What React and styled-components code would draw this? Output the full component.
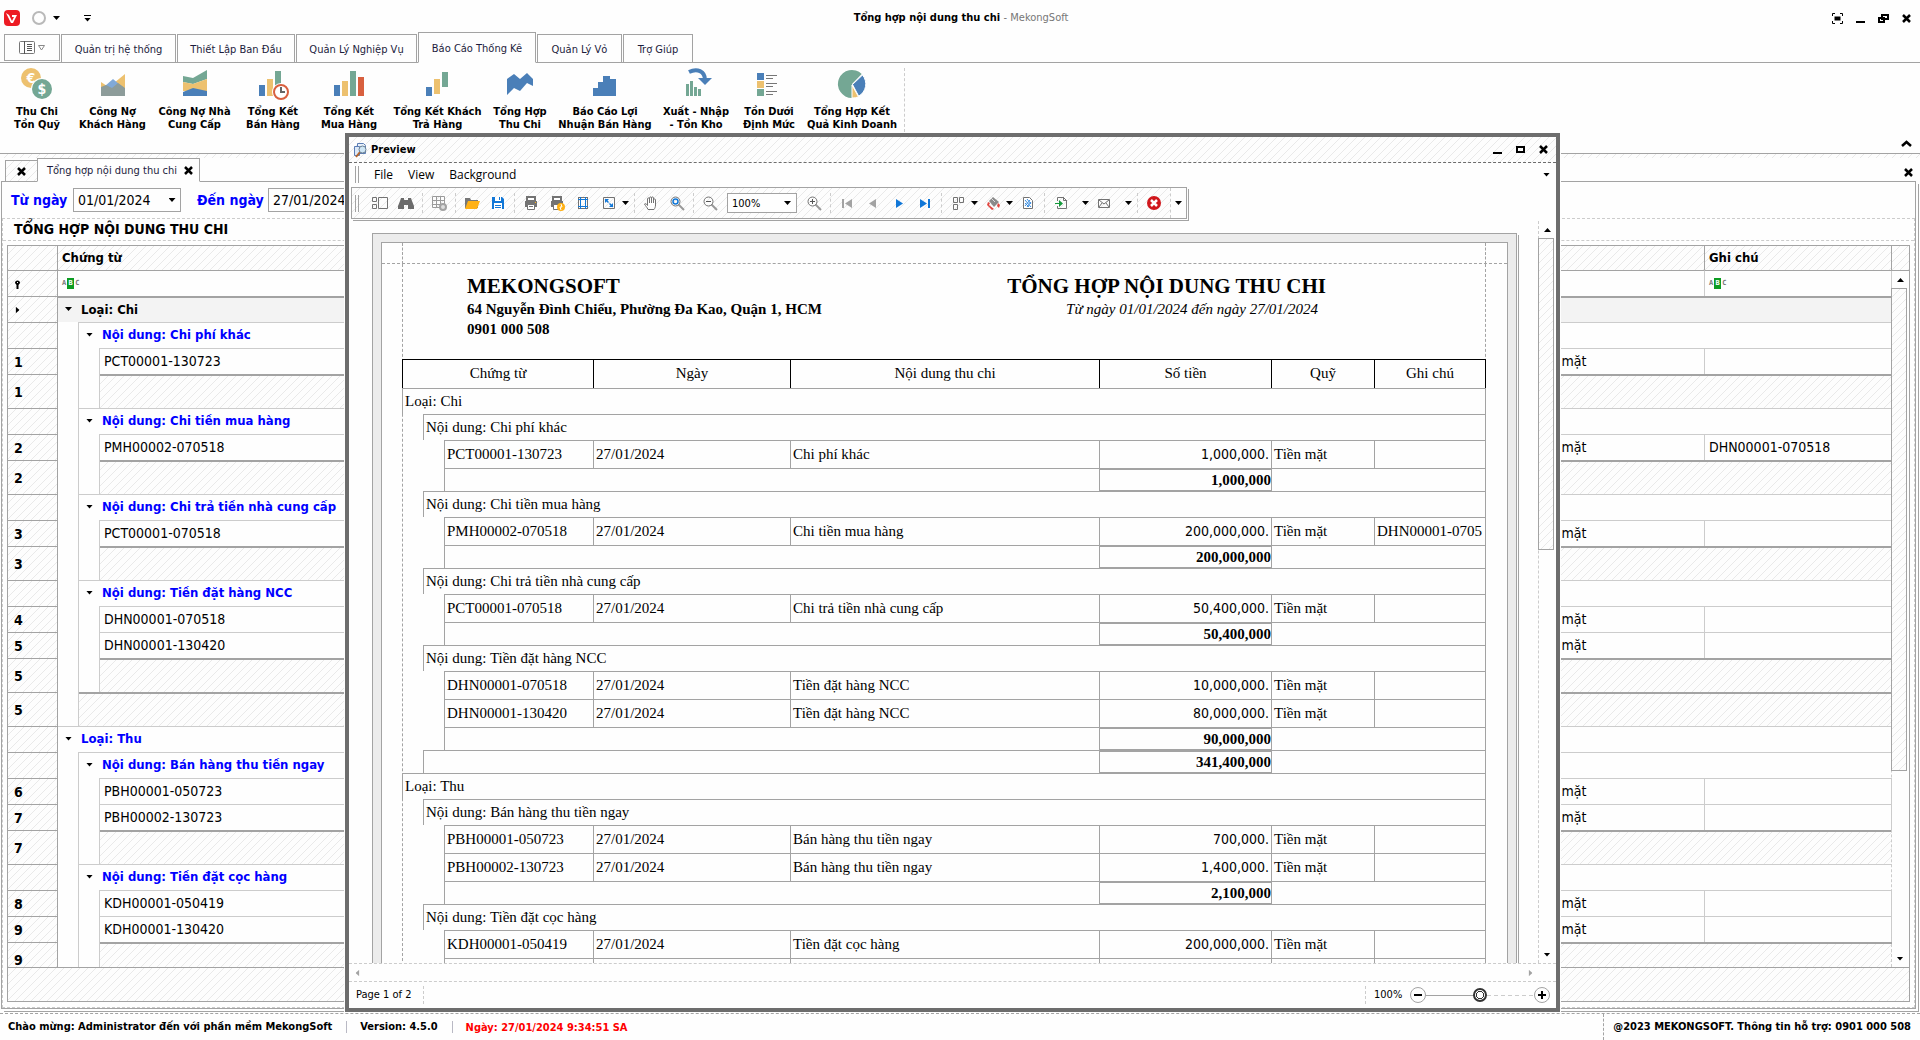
import React, { useState } from 'react';
import styled, { createGlobalStyle, css } from 'styled-components';

const line = '#a3a3a3';
const soft = '#cccccc';
const hatch = css`
	background-color: #fdfdfd;
	background-image: linear-gradient(
		135deg,
		transparent 46%,
		#e9e9e9 46%,
		#e9e9e9 54%,
		transparent 54%
	);
	background-size: 8px 8px;
`;

const GlobalStyle = createGlobalStyle`
	* {
		box-sizing: border-box;
	}
	body {
		margin: 0;
		background: #fefefe;
		color: #000;
		font-family: 'DejaVu Sans Condensed', 'DejaVu Sans', sans-serif;
		font-size: 11px;
	}
	button, input, select {
		font: inherit;
		color: inherit;
		margin: 0;
		padding: 0;
		border: 0;
		border-radius: 0;
		background: none;
	}
	svg {
		display: block;
		flex: none;
	}
`;

/* ---------- data ---------- */

const tabs = [
	{ name: 'Quản trị hệ thống', width: 116 },
	{ name: 'Thiết Lập Ban Đầu', width: 119 },
	{ name: 'Quản Lý Nghiệp Vụ', width: 122 },
	{ name: 'Báo Cáo Thống Kê', width: 119 },
	{ name: 'Quản Lý Vỏ', width: 86 },
	{ name: 'Trợ Giúp', width: 71 },
];

const ribbon = [
	{ icon: 'coins', lines: ['Thu Chi', 'Tồn Quỹ'], width: 66 },
	{ icon: 'area', lines: ['Công Nợ', 'Khách Hàng'], width: 85 },
	{ icon: 'stacked', lines: ['Công Nợ Nhà', 'Cung Cấp'], width: 79 },
	{ icon: 'clock', lines: ['Tổng Kết', 'Bán Hàng'], width: 78 },
	{ icon: 'bars', lines: ['Tổng Kết', 'Mua Hàng'], width: 74 },
	{ icon: 'waterfall', lines: ['Tổng Kết Khách', 'Trả Hàng'], width: 103 },
	{ icon: 'range', lines: ['Tổng Hợp', 'Thu Chi'], width: 62 },
	{ icon: 'steps', lines: ['Báo Cáo Lợi', 'Nhuận Bán Hàng'], width: 108 },
	{ icon: 'turn', lines: ['Xuất - Nhập', '- Tồn Kho'], width: 74 },
	{ icon: 'list', lines: ['Tồn Dưới', 'Định Mức'], width: 72 },
	{ icon: 'pie', lines: ['Tổng Hợp Kết', 'Quả Kinh Doanh'], width: 94 },
];

const report = [
	{
		name: 'Loại: Chi',
		total: '341,400,000',
		groups: [
			{
				name: 'Nội dung: Chi phí khác',
				total: '1,000,000',
				rows: [['PCT00001-130723', 'Chi phí khác', '1,000,000.', '']],
			},
			{
				name: 'Nội dung: Chi tiền mua hàng',
				total: '200,000,000',
				rows: [
					[
						'PMH00002-070518',
						'Chi tiền mua hàng',
						'200,000,000.',
						'DHN00001-070518',
					],
				],
			},
			{
				name: 'Nội dung: Chi trả tiền nhà cung cấp',
				total: '50,400,000',
				rows: [
					['PCT00001-070518', 'Chi trả tiền nhà cung cấp', '50,400,000.', ''],
				],
			},
			{
				name: 'Nội dung: Tiền đặt hàng NCC',
				total: '90,000,000',
				rows: [
					['DHN00001-070518', 'Tiền đặt hàng NCC', '10,000,000.', ''],
					['DHN00001-130420', 'Tiền đặt hàng NCC', '80,000,000.', ''],
				],
			},
		],
	},
	{
		name: 'Loại: Thu',
		groups: [
			{
				name: 'Nội dung: Bán hàng thu tiền ngay',
				total: '2,100,000',
				rows: [
					['PBH00001-050723', 'Bán hàng thu tiền ngay', '700,000.', ''],
					['PBH00002-130723', 'Bán hàng thu tiền ngay', '1,400,000.', ''],
				],
			},
			{
				name: 'Nội dung: Tiền đặt cọc hàng',
				rows: [
					['KDH00001-050419', 'Tiền đặt cọc hàng', '200,000,000.', ''],
					['KDH00001-130420', '', '', ''],
				],
			},
		],
	},
];

/* ---------- icons ---------- */

const blue = '#4a7fb8';
const yellow = '#edc16f';
const green = '#74a794';
const red = '#d8603f';

const ribbonIcons = {
	coins: (
		<>
			<circle cx='10' cy='10' r='10' fill={yellow} />
			<text x='10' y='15' fontSize='14' fontWeight='700' fill='#fff' textAnchor='middle'>€</text>
			<circle cx='21' cy='21' r='11' fill='#fff' />
			<circle cx='21' cy='21' r='10' fill={green} />
			<text x='21' y='26' fontSize='14' fontWeight='700' fill='#fff' textAnchor='middle'>$</text>
		</>
	),
	area: (
		<>
			<path d='M4 14l6 4 7-3 11-9v22H4z' fill={yellow} />
			<path d='M8 18l8-7 12 10v7H8z' fill='#80a9d8' />
			<path d='M4 19l5-2 6 3 6-5 7 5v8H4z' fill='#8d9c9a' />
		</>
	),
	stacked: (
		<>
			<path d='M4 8l10 2 14-8v9l-14 5-10-2z' fill={green} />
			<path d='M4 14l10 2 14-5v12H4z' fill={yellow} />
			<path d='M4 24l10-4 14 3v5H4z' fill={blue} />
		</>
	),
	clock: (
		<>
			<path d='M2 17h6v11H2z' fill={blue} />
			<path d='M10 11h6v17h-6z' fill={yellow} />
			<path d='M18 3h6v20h-6z' fill={green} />
			<circle cx='24' cy='24' r='9' fill='#fff' />
			<circle cx='24' cy='24' r='7' fill='#fff' stroke={red} strokeWidth='2' />
			<path d='M24 19v5h4' fill='none' stroke='#666' strokeWidth='2' />
		</>
	),
	bars: (
		<>
			<path d='M1 17h6v11H1z' fill={blue} />
			<path d='M9 13h6v15H9z' fill={yellow} />
			<path d='M17 3h6v25h-6z' fill={green} />
			<path d='M25 9h6v19h-6z' fill={red} />
		</>
	),
	waterfall: (
		<>
			<path d='M4 19h6v9H4z' fill={blue} />
			<path d='M12 11h6v15h-6z' fill={yellow} />
			<path d='M20 4h6v15h-6z' fill={green} />
		</>
	),
	range: <path d='M3 11l7-5 6 5 7-6 6 6v7l-6-3-7 8-6-3-7 7z' fill={blue} />,
	steps: <path d='M4 20h5v-6h5V8h7v3h6v17H4z' fill={blue} />,
	turn: (
		<>
			<path d='M6 16h3v12H6zM10 13h3v15h-3zM14 19h3v9h-3zM18 21h3v7h-3z' fill={green} />
			<path d='M9 4c8-4 16-1 16 8' fill='none' stroke={blue} strokeWidth='4' />
			<path d='M18 10h14l-7 7z' fill={blue} />
		</>
	),
	list: (
		<>
			<path d='M4 5h7v7H4z' fill={blue} />
			<path d='M4 13h7v7H4z' fill={yellow} />
			<path d='M4 21h7v7H4z' fill={green} />
			<path
				d='M13 7.500h11M13 10.500h7M13 15.500h11M13 18.500h7M13 23.500h11M13 26.500h7'
				stroke='#777'
			/>
		</>
	),
	pie: (
		<>
			<path d='M16 16V30A14 14 0 1 1 25.700 6z' fill={green} />
			<path d='M16.500 16.500L26.500 7A14 14 0 0 1 22.700 28.200z' fill={blue} stroke='#fff' strokeWidth='1' />
			<path d='M16 17l6.500 11.800A14 14 0 0 1 16 30z' fill={yellow} stroke='#fff' strokeWidth='1' />
		</>
	),
};

const toolIcons = {
	thumbs: (
		<path d='M.5 2.500h4v4h-4zM.5 9.500h4v4h-4zM6.500 2.500h9v11h-9z' fill='none' stroke='#737373' />
	),
	find: (
		<path
			d='M3 3h3v2h4V3h3l1 3 2 5v3h-6v-4H6v4H0v-3l2-5z'
			fill='#6b6b6b'
		/>
	),
	options: (
		<>
			<path d='M1.500 1.500h12v11h-12zM1 5.500h13M1 9.500h13M5.500 1v12M9.500 1v12' fill='none' stroke='#9b9b9b' />
			<circle cx='12' cy='12' r='3' fill='#ddd' stroke='#a2a2a2' strokeWidth='2' />
		</>
	),
	open: (
		<>
			<path d='M1 3h5l1 2h7v8H1z' fill='#777' />
			<path d='M4 6h12l-3 8H1z' fill='#ffb115' />
		</>
	),
	save: (
		<>
			<path d='M2 2h10l2 2v10H2z' fill='#1177d7' />
			<path d='M5 2h6v4H5zM4 8h8v6H4z' fill='#fff' />
			<path d='M9 2h1v3H9zM5 10h6v1H5zM5 12h6v1H5z' fill='#1177d7' />
		</>
	),
	print: (
		<>
			<path d='M4 2h8v4H4z' fill='#fff' stroke='#737373' strokeWidth='2' />
			<path d='M2 6h12v6H2z' fill='#737373' />
			<path d='M4.500 9.500h7v5h-7z' fill='#fff' stroke='#737373' />
			<path d='M6 11.500h4' stroke='#737373' />
			<path d='M12 7h1v1h-1z' fill='#ffb115' />
		</>
	),
	quickPrint: (
		<>
			<path d='M4 2h8v4H4z' fill='#fff' stroke='#737373' strokeWidth='2' />
			<path d='M2 6h12v6H2z' fill='#737373' />
			<path d='M4.500 9.500h7v5h-7z' fill='#fff' stroke='#737373' />
			<circle cx='12' cy='12' r='4' fill='#ffb115' />
			<path d='M12 9l1 3h-2l1 3' stroke='#fff' fill='none' />
		</>
	),
	margins: (
		<>
			<path d='M3.500 2v12M12.500 2v12M3 2.500h10M3 13.500h10' stroke='#737373' />
			<path d='M5.500 2v12M10.500 2v12M3 4.500h10M3 11.500h10' stroke='#1177d7' />
		</>
	),
	scale: (
		<>
			<path d='M2.500 2.500h11v11h-11z' fill='none' stroke='#737373' />
			<path d='M4 4h4L6.500 5.500 8 7 7 8 5.500 6.500 4 8zM12 12H8l1.500-1.500L8 9l1-1 1.500 1.500L12 8z' fill='#1177d7' />
		</>
	),
	hand: (
		<path
			d='M5 14.500C4 12 2.500 11 1.500 9c1-1 2 0 3 1.500V4c0-1.500 2-1.500 2 0v4V3c0-1.500 2-1.500 2 0v5V3c0-1.500 2-1.500 2 0v5V5c0-1.500 2-1.500 2 0v5c0 2-.5 3-1.500 4.500z'
			fill='#fff'
			stroke='#737373'
		/>
	),
	magnifier: (
		<>
			<path d='M9.500 9.500L15 15' stroke='#999' strokeWidth='2' />
			<circle cx='6.500' cy='6.500' r='4.500' fill='none' stroke='#737373' />
			<circle cx='6.500' cy='6.500' r='2.500' fill='none' stroke='#1177d7' strokeWidth='1.500' />
		</>
	),
	zoomOut: (
		<>
			<path d='M9.500 9.500L15 15' stroke='#999' strokeWidth='2' />
			<circle cx='6.500' cy='6.500' r='4.500' fill='none' stroke='#737373' />
			<path d='M4 6.500h5' stroke='#555' />
		</>
	),
	zoomIn: (
		<>
			<path d='M9.500 9.500L15 15' stroke='#999' strokeWidth='2' />
			<circle cx='6.500' cy='6.500' r='4.500' fill='none' stroke='#737373' />
			<path d='M4 6.500h5M6.500 4v5' stroke='#555' />
		</>
	),
	first: <path d='M3 4h2v9H3zM13 4v9L6 8.500z' fill='#a3a3a3' />,
	prev: <path d='M11 4v9L4 8.500z' fill='#a3a3a3' />,
	next: <path d='M5 4v9l7-4.500z' fill='#1177d7' />,
	last: <path d='M3 4v9l7-4.500zM11 4h2v9h-2z' fill='#1177d7' />,
	pages: (
		<path d='M3.500 2.500h4v5h-4zM9.500 2.500h4v5h-4zM3.500 9.500h4v5h-4z' fill='none' stroke='#737373' />
	),
	fill: (
		<>
			<path d='M4 6l4-4 6 5-5 5z' fill='#8a8a8a' />
			<path d='M6 3l4 4' stroke='#ddd' />
			<path d='M3 7l2 1-1 2 5 4-2 1-5-5zM13 8l2 2-1 3-2-2z' fill='#e0453f' />
		</>
	),
	watermark: (
		<>
			<path d='M3.500 2.500h6l3 3v8h-9z' fill='#fff' stroke='#737373' />
			<path
				d='M5 5l6 7M5 8l4 4M7 4l4 5M5 11l5-6M7 12l4-5'
				stroke='#3c8ee0'
			/>
		</>
	),
	exportDoc: (
		<>
			<path d='M4.500 6V2.500h6l3 3v8h-9V11' fill='none' stroke='#737373' />
			<path d='M10.500 2v3.500H14' fill='none' stroke='#737373' />
			<path d='M2 8h4V5l4 3.500-4 3.500V9H2z' fill='#159a3c' />
		</>
	),
	mail: (
		<>
			<path d='M2.500 4.500h11v8h-11z' fill='none' stroke='#737373' />
			<path d='M3 5l5 4 5-4M3 12l3-4M13 12l-3-4' fill='none' stroke='#737373' />
		</>
	),
	close: (
		<>
			<circle cx='8' cy='8' r='7' fill='#d0171c' />
			<path d='M5 5l6 6M11 5l-6 6' stroke='#fff' strokeWidth='2.500' />
		</>
	),
};

const RibbonIcon = ({ name }) => (
	<svg width='32' height='32' viewBox='0 0 32 32'>{ribbonIcons[name]}</svg>
);

const ToolIcon = ({ name }) => (
	<svg width='16' height='16' viewBox='0 0 16 16'>{toolIcons[name]}</svg>
);

const glyphs = {
	close: <path d='M2 2l7 7M9 2L2 9' stroke='#000' strokeWidth='2.500' />,
	min: <path d='M1 8h9v2H1z' />,
	max: <path d='M2 3h7v5H2z' fill='none' stroke='#000' strokeWidth='2' />,
	restore: (
		<path d='M4 2h6v4H4zM1 5h5v4H1z' fill='#fff' stroke='#000' strokeWidth='2' />
	),
	full: (
		<>
			<path d='M3.500 4.500h4v2h-4z' fill='none' stroke='#000' strokeWidth='2' />
			<path d='M.5 3V.5H3M8 .5h2.500V3M.5 8v2.500H3M8 10.500h2.500V8' fill='none' stroke='#000' />
		</>
	),
	up: <path d='M1 8l4.500-4L10 8' fill='none' stroke='#000' strokeWidth='2.500' />,
};

const Glyph = ({ name }) => (
	<svg width='11' height='11' viewBox='0 0 11 11'>{glyphs[name]}</svg>
);

/* ---------- small shared parts ---------- */

const rotate = { down: 0, up: 180, left: 90, right: 270 };
const Caret = styled.i`
	display: block;
	flex: none;
	width: 7px;
	height: 4px;
	background: ${(p) => p.$color || '#000'};
	clip-path: polygon(0 0, 100% 0, 50% 100%);
	transform: rotate(${(p) => rotate[p.$dir || 'down']}deg);
`;

const IconButton = styled.button`
	display: flex;
	align-items: center;
	justify-content: center;
	width: ${(p) => p.$width || 23}px;
	height: 20px;
`;

/* ---------- application frame ---------- */

const Screen = styled.div`
	position: relative;
	display: flex;
	flex-direction: column;
	height: 100vh;
	overflow: hidden;
`;

const TitleBar = styled.header`
	display: grid;
	grid-template-columns: 1fr auto 1fr;
	align-items: center;
	height: 32px;
	padding: 4px 2px 0 4px;
`;

const QuickAccess = styled.div`
	display: flex;
	align-items: center;
`;

const StyleButton = styled.button`
	display: flex;
	align-items: center;
	gap: 7px;
	margin-left: 12px;
`;

const Ring = styled.i`
	width: 14px;
	height: 14px;
	border: 2px solid #b9b9b9;
	border-radius: 50%;
`;

const Customize = styled.i`
	display: flex;
	padding-top: 2px;
	border-top: 1px solid #000;
`;

const AppTitle = styled.h1`
	margin: 0;
	font-size: 11px;
	line-height: 16px;

	span {
		color: #777;
		font-weight: 400;
	}
`;

const WindowButtons = styled.div`
	display: flex;
	justify-content: flex-end;
`;

const TabStrip = styled.nav`
	display: flex;
	align-items: flex-end;
	gap: 1px;
	height: 31px;
	padding-left: 4px;
	box-shadow: inset 0 -1px 0 ${line};
`;

const AppMenu = styled.button`
	display: flex;
	align-items: center;
	justify-content: center;
	gap: 3px;
	width: 56px;
	height: 27px;
	margin-bottom: 2px;
	border: 1px solid ${line};
`;

const Tab = styled.button`
	width: ${(p) => p.$width - 1}px;
	height: ${(p) => (p.$active ? 31 : 29)}px;
	padding-top: 1px;
	border: 1px solid ${line};
	border-bottom-color: ${(p) => (p.$active ? '#fefefe' : line)};
	background: #fefefe;
	color: #1c1c3c;
`;

const Ribbon = styled.section`
	display: flex;
	align-items: flex-start;
	flex: none;
	height: 91px;
	padding: 5px 2px 0 4px;
	border-bottom: 1px solid ${line};
`;

const RibbonButton = styled.button`
	display: flex;
	flex-direction: column;
	align-items: center;
	gap: 5px;
	width: ${(p) => p.$width}px;
	font-weight: 700;
	line-height: 13px;
	white-space: nowrap;
`;

const RibbonEnd = styled.i`
	height: 64px;
	margin-left: 5px;
	border-left: 1px dashed ${soft};
`;

const Collapse = styled(IconButton)`
	align-self: flex-end;
	margin-left: auto;
`;

const DocTabs = styled.div`
	display: flex;
	align-items: flex-end;
	flex: none;
	height: 28px;
	padding: 0 0 0 5px;
	margin-bottom: -1px;
	position: relative;

	&::before {
		content: '';
		position: absolute;
		inset: 0 0 auto 0;
		height: 4px;
		${hatch}
	}
`;

const ClosedTab = styled.button`
	display: flex;
	align-items: center;
	justify-content: center;
	width: 32px;
	height: 22px;
	border: 1px solid ${line};
	border-right: 0;
	${hatch}
`;

const DocTab = styled.div`
	display: flex;
	align-items: center;
	justify-content: space-between;
	width: 163px;
	height: 24px;
	padding: 0 0 0 9px;
	border: 1px solid ${line};
	border-bottom-color: #fefefe;
	background: #fefefe;
	color: #1c1c3c;
	white-space: nowrap;
	z-index: 1;
`;

const DocClose = styled(IconButton)`
	margin-left: auto;
`;

const DocPanel = styled.main`
	display: flex;
	flex-direction: column;
	flex: 1;
	min-height: 0;
	margin: 0 4px 4px 1px;
	border: 1px solid ${line};
	background: #fefefe;
	box-shadow: 2px 2px 0 #fefefe, 3px 3px 0 ${line};
`;

const Filters = styled.form`
	display: flex;
	align-items: center;
	height: 36px;
	padding-left: 9px;
	font-size: 14px;
`;

const FilterLabel = styled.label`
	width: ${(p) => p.$width}px;
	color: #0000ff;
	font-weight: 700;
	white-space: nowrap;
`;

const DateBox = styled.div`
	display: flex;
	align-items: center;
	width: 108px;
	height: 24px;
	margin-right: 16px;
	border: 1px solid ${line};

	input {
		flex: 1;
		min-width: 0;
		padding-left: 4px;
	}
`;

const GroupBox = styled.section`
	display: flex;
	flex-direction: column;
	flex: 1;
	min-height: 0;
	border: 1px dashed ${soft};
`;

const GroupTitle = styled.h2`
	flex: none;
	height: 22px;
	margin: 0 0 4px;
	padding-left: 11px;
	border-bottom: 1px dashed ${soft};
	font-size: 14px;
	line-height: 21px;
`;

/* ---------- main grid ---------- */

const GridBox = styled.div`
	display: flex;
	flex-direction: column;
	flex: 1;
	min-height: 0;
	margin: 0 4px 5px;
	border: 1px solid ${line};
`;

const GridView = styled.div`
	display: flex;
	flex: 1;
	min-height: 0;
`;

const GridClip = styled.div`
	flex: 1;
	overflow: hidden;
`;

const GridTable = styled.table`
	width: 100%;
	table-layout: fixed;
	border-spacing: 0;
	font-size: 14px;
	white-space: nowrap;
`;

const GridHead = styled.th`
	height: 24px;
	padding: 0 4px 2px;
	border-right: 1px solid ${line};
	font-size: 13px;
	text-align: left;
	${hatch}
`;

const Indicator = styled.td`
	height: ${(p) => p.$height || 26}px;
	padding: 1px 0 0 6px;
	border-top: 1px solid ${line};
	border-right: 1px solid ${line};
	font-weight: 700;
	${hatch}
`;

const FilterCell = styled.td`
	padding: 0 4px;
	border-top: 1px solid ${line};
	border-right: 1px solid ${soft};
`;

const Indent = styled.td`
	padding: 0;
	border-right: 1px solid ${soft};
`;

const GroupCell = styled.td`
	padding: 0 0 2px 7px;
	border-top: ${(p) => (p.$focus ? `2px solid ${line}` : `1px solid ${soft}`)};
	background: ${(p) => (p.$focus ? '#f3f3f3' : 'transparent')};
	color: ${(p) => (p.$focus ? '#000' : '#0000ff')};
	font-size: 13px;
	font-weight: 700;

	div {
		display: flex;
		align-items: center;
		gap: 9px;
	}
`;

const DataCell = styled.td`
	padding: 0 4px 2px;
	border-top: 1px solid ${soft};
	border-right: 1px solid ${soft};
`;

const FooterCell = styled.td`
	padding: 0;
	border-top: 2px solid ${line};
	${hatch}
`;

const GridFooter = styled.div`
	flex: none;
	height: 34px;
	border-top: 1px solid ${line};
	${hatch}
`;

const AbcBadge = styled.span`
	display: flex;
	align-items: center;
	gap: 1px;
	color: #777;
	font: 700 7px/11px 'DejaVu Sans Mono', monospace;

	b {
		width: 7px;
		background: #0c9c22;
		color: #fff;
		text-align: center;
	}
`;

const Scroll = styled.div`
	display: flex;
	flex-direction: column;
	flex: none;
	width: 17px;
`;

const ScrollHead = styled.div`
	height: 25px;
	border-left: 1px solid ${line};
	border-bottom: 1px solid ${line};
	margin-left: -1px;
	${hatch}
`;

const Track = styled.div`
	display: flex;
	flex-direction: column;
	flex: 1;
	min-height: 0;
	border-left: 1px dashed ${soft};
	margin-left: -1px;
`;

const ScrollButton = styled.button`
	display: flex;
	align-items: center;
	justify-content: center;
	flex: none;
	width: 16px;
	height: 17px;
`;

const Rail = styled.div`
	flex: 1;
`;

const Thumb = styled.div`
	width: 16px;
	height: ${(p) => p.$size};
	margin-left: -1px;
	border: 1px solid ${line};
	${hatch}
`;

const VerticalScroll = ({ head, size }) => (
	<Scroll>
		{head && <ScrollHead />}
		<Track>
			<ScrollButton aria-label='Scroll up'><Caret $dir='up' /></ScrollButton>
			<Rail><Thumb $size={size} /></Rail>
			<ScrollButton aria-label='Scroll down'><Caret /></ScrollButton>
		</Track>
	</Scroll>
);

const Abc = () => <AbcBadge>A<b>B</b>C</AbcBadge>;

const MainGrid = () => {
	let count = 0;
	return (
		<GridBox>
			<GridView>
				<GridClip>
					<GridTable>
						<colgroup>
							<col style={{ width: 50 }} />
							<col style={{ width: 21 }} />
							<col style={{ width: 21 }} />
							<col style={{ width: 260 }} />
							<col />
							<col style={{ width: 178 }} />
							<col style={{ width: 187 }} />
						</colgroup>
						<thead>
							<tr>
								<GridHead />
								<GridHead colSpan={3}>Chứng từ</GridHead>
								<GridHead />
								<GridHead />
								<GridHead>Ghi chú</GridHead>
							</tr>
						</thead>
						<tbody>
							<tr>
								<Indicator>
									<svg width='7' height='9' viewBox='0 0 7 9'>
										<path d='M1 3a2.500 2.500 0 0 1 5 0L4.500 5v4h-2V5z' />
										<path d='M3 2h1v1H3z' fill='#fff' />
									</svg>
								</Indicator>
								<FilterCell colSpan={3}><Abc /></FilterCell>
								<FilterCell />
								<FilterCell />
								<FilterCell><Abc /></FilterCell>
							</tr>
							{report.map((type, t) => (
								<React.Fragment key={type.name}>
									<tr>
										<Indicator>{t === 0 && <Caret $dir='right' />}</Indicator>
										<GroupCell colSpan={6} $focus={t === 0}>
											<div><Caret />{type.name}</div>
										</GroupCell>
									</tr>
									{type.groups.map((group) => (
										<React.Fragment key={group.name}>
											<tr>
												<Indicator />
												<Indent />
												<GroupCell colSpan={5}>
													<div><Caret />{group.name}</div>
												</GroupCell>
											</tr>
											{group.rows.map((row) => {
												count += 1;
												return (
													<tr key={row[0]}>
														<Indicator>{count}</Indicator>
														<Indent />
														<Indent />
														<DataCell>{row[0]}</DataCell>
														<DataCell />
														<DataCell>Tiền mặt</DataCell>
														<DataCell>{row[3]}</DataCell>
													</tr>
												);
											})}
											<tr>
												<Indicator $height={34}>{count}</Indicator>
												<Indent />
												<Indent />
												<FooterCell colSpan={4} />
											</tr>
										</React.Fragment>
									))}
									{t === 0 && (
										<tr>
											<Indicator $height={34}>{count}</Indicator>
											<Indent />
											<FooterCell colSpan={5} />
										</tr>
									)}
								</React.Fragment>
							))}
						</tbody>
					</GridTable>
				</GridClip>
				<VerticalScroll head size='73%' />
			</GridView>
			<GridFooter />
		</GridBox>
	);
};

/* ---------- preview window ---------- */

const Window = styled.section`
	position: absolute;
	inset: 133px 360px 28px 345px;
	display: flex;
	flex-direction: column;
	border: 4px solid #6d6d6d;
	background: #fefefe;
	box-shadow: 0 0 0 1px #fefefe;
`;

const WindowTitle = styled.header`
	display: flex;
	align-items: center;
	gap: 3px;
	flex: none;
	height: 26px;
	padding: 0 1px 0 4px;
	border-bottom: 1px dashed #6d6d6d;
	${hatch}

	h2 {
		flex: 1;
		margin: 0;
		font-size: 11px;
	}
`;

const MenuBar = styled.nav`
	display: flex;
	align-items: center;
	gap: 15px;
	height: 24px;
	padding: 0 6px 1px;
	font-family: 'Open Sans', sans-serif;
	font-size: 12px;
`;

const Grip = styled.i`
	flex: none;
	width: 4px;
	height: 17px;
	border: solid ${line};
	border-width: 0 1px;
`;

const MenuCaret = styled.button`
	margin-left: auto;
`;

const ToolBar = styled.div`
	display: flex;
	align-items: center;
	flex: none;
	align-self: flex-start;
	width: 836px;
	height: 32px;
	margin: 0 0 2px 2px;
	padding-left: 3px;
	border: 1px solid ${line};
	box-shadow: 1px 1px 0 #fefefe, 2px 2px 0 ${line};
	${hatch}

	${Grip} {
		margin-right: 8px;
	}
`;

const ToolButton = styled.button`
	display: flex;
	align-items: center;
	flex: none;
	width: ${(p) => 26 + (p.$drop || 0)}px;
	height: 26px;
	padding-left: 5px;

	${Caret} {
		margin-left: ${(p) => (p.$drop || 0) - 4}px;
	}
`;

const Separator = styled.i`
	flex: none;
	width: 4px;
	height: 20px;
	margin-left: 3px;
	border-left: 1px dashed ${soft};
`;

const ZoomSelect = styled.div`
	position: relative;
	flex: none;
	width: 70px;
	height: 20px;
	margin: 0 4px;
	border: 1px solid ${line};
	background: #fefefe;

	select {
		width: 100%;
		height: 18px;
		padding-left: 4px;
		appearance: none;
	}

	${Caret} {
		position: absolute;
		top: 7px;
		right: 5px;
		pointer-events: none;
	}
`;

const MoreTools = styled.button`
	display: flex;
	align-items: center;
	justify-content: center;
	width: 16px;
	height: 30px;
	margin-left: auto;
	border-left: 1px dashed ${soft};
	background: #fefefe;
`;

const Viewer = styled.div`
	display: flex;
	flex: 1;
	min-height: 0;
`;

const PageArea = styled.div`
	flex: 1;
	overflow: hidden;
	padding: 12px 22px 0 23px;
`;

const PageFrame = styled.div`
	padding: 8px 8px 0;
	border: 1px solid ${line};
	background: #ececec;
	box-shadow: 1px 1px 0 #fefefe, 2px 2px 0 ${line};
`;

const Paper = styled.article`
	display: grid;
	grid-template: 21px auto / 20px 1fr 21px;
	border: 1px solid ${line};
	background: #fefefe;
	font-family: 'Liberation Serif', serif;
	font-size: 15px;
`;

const TopMargin = styled.div`
	grid-row: 1;
	grid-column: 2;
	border: dashed ${line};
	border-width: 0 1px;
`;

const EdgeMargin = styled.div`
	grid-row: 1;
	grid-column: 1 / -1;
	border-bottom: 1px dashed ${line};
`;

const PaperBody = styled.div`
	grid-column: 2;
	border: dashed ${line};
	border-width: 0 1px;
`;

const ReportHead = styled.header`
	display: flex;
	justify-content: space-between;
	height: 95px;
	padding: 9px 159px 0 64px;
	font-weight: 700;
	line-height: 20px;
	white-space: nowrap;

	h3 {
		margin: 0;
		font-size: 21px;
		line-height: 26px;
	}
	p {
		margin: 0;
	}
`;

const Period = styled.p`
	padding-right: 8px;
	font-style: italic;
	font-weight: 400;
	text-align: right;
`;

const ReportTable = styled.table`
	width: calc(100% + 2px);
	margin-left: -1px;
	table-layout: fixed;
	border-spacing: 0;
	white-space: nowrap;

	td {
		padding: 0 2px 1px;
		overflow: hidden;
	}
`;

const ReportTh = styled.th`
	height: 29px;
	padding: 0 0 1px;
	border: solid #000;
	border-width: 1px 1px 0 0;
	font-weight: 400;

	&:first-child {
		border-left-width: 1px;
	}
`;

const Gap = styled.td`
	border-right: 1px solid ${line};
`;

const BandCell = styled.td`
	height: 26px;
	border-top: 1px solid ${line};
	border-right: 1px solid ${line};
	border-left: ${(p) => (p.$first ? `1px solid ${line}` : 0)};
`;

const RecordCell = styled.td`
	height: 28px;
	border-top: 1px solid ${line};
	border-right: 1px solid ${line};
`;

const MoneyCell = styled(RecordCell)`
	font-family: 'DejaVu Sans Condensed', 'DejaVu Sans', sans-serif;
	font-size: 14px;
	text-align: right;
`;

const TotalSpace = styled.td`
	height: 23px;
	border-top: 1px solid ${line};
	border-right: 1px solid ${line};
`;

const TotalCell = styled.td`
	border: solid ${line};
	border-width: 2px 1px 1px 0;
	font-weight: 700;
	text-align: right;

	&& {
		padding: 0;
	}
`;

const BottomScroll = styled.div`
	display: flex;
	align-items: center;
	justify-content: space-between;
	flex: none;
	height: 19px;
	padding: 0 18px 0 0;
	border: dashed ${soft};
	border-width: 1px 0;
`;

const PreviewStatus = styled.footer`
	display: flex;
	align-items: center;
	flex: none;
	height: 26px;
	padding: 0 6px 0 7px;
`;

const PageCount = styled.span`
	width: 68px;
	line-height: 18px;
	border-right: 1px dashed ${soft};
`;

const ZoomLabel = styled.label`
	margin-left: auto;
	padding-left: 8px;
	width: 45px;
	line-height: 18px;
	border-left: 1px dashed ${soft};
`;

const RoundButton = styled.button`
	display: flex;
	align-items: center;
	justify-content: center;
	width: 16px;
	height: 16px;
	border: 1px solid ${line};
	border-radius: 50%;
`;

const thumb = css`
	appearance: none;
	box-sizing: border-box;
	width: 14px;
	height: 14px;
	border: 2px solid #333;
	border-radius: 50%;
	background: radial-gradient(circle, #fff 0 3px, #333 3px 4px, #fff 4px);
`;

const ZoomSlider = styled.input`
	appearance: none;
	width: 108px;
	height: 16px;
	background: linear-gradient(${line}, ${line}) 0 8px / 50% 1px no-repeat,
		repeating-linear-gradient(90deg, ${soft} 0 4px, transparent 4px 7px) 54px
			8px / 54px 1px no-repeat;

	&::-webkit-slider-thumb {
		${thumb}
	}
	&::-moz-range-thumb {
		${thumb}
	}
`;

const Tool = ({ name, drop }) => (
	<ToolButton type='button' aria-label={name} $drop={drop}>
		<ToolIcon name={name} />
		{drop && <Caret />}
	</ToolButton>
);

const Report = () => (
	<ReportTable>
		<colgroup>
			<col style={{ width: 22 }} />
			<col style={{ width: 21 }} />
			<col style={{ width: 149 }} />
			<col style={{ width: 197 }} />
			<col />
			<col style={{ width: 172 }} />
			<col style={{ width: 103 }} />
			<col style={{ width: 111 }} />
		</colgroup>
		<thead>
			<tr>
				<ReportTh colSpan={3}>Chứng từ</ReportTh>
				<ReportTh>Ngày</ReportTh>
				<ReportTh>Nội dung thu chi</ReportTh>
				<ReportTh>Số tiền</ReportTh>
				<ReportTh>Quỹ</ReportTh>
				<ReportTh>Ghi chú</ReportTh>
			</tr>
		</thead>
		<tbody>
			{report.map((type) => (
				<React.Fragment key={type.name}>
					<tr>
						<BandCell colSpan={8} $first>{type.name}</BandCell>
					</tr>
					{type.groups.map((group) => (
						<React.Fragment key={group.name}>
							<tr>
								<Gap />
								<BandCell colSpan={7}>{group.name}</BandCell>
							</tr>
							{group.rows.map(([code, note, money, ref]) => (
								<tr key={code}>
									<td />
									<Gap />
									<RecordCell>{money && code}</RecordCell>
									<RecordCell>{money && '27/01/2024'}</RecordCell>
									<RecordCell>{note}</RecordCell>
									<MoneyCell>{money}</MoneyCell>
									<RecordCell>{money && 'Tiền mặt'}</RecordCell>
									<RecordCell>{ref.slice(0, 13)}</RecordCell>
								</tr>
							))}
							{group.total && (
								<tr>
									<td />
									<Gap />
									<TotalSpace colSpan={3} />
									<TotalCell>{group.total}</TotalCell>
									<TotalSpace colSpan={2} />
								</tr>
							)}
						</React.Fragment>
					))}
					{type.total && (
						<tr>
							<Gap />
							<TotalSpace colSpan={4} />
							<TotalCell>{type.total}</TotalCell>
							<TotalSpace colSpan={2} />
						</tr>
					)}
				</React.Fragment>
			))}
		</tbody>
	</ReportTable>
);

const Preview = () => {
	const [zoom, setZoom] = useState(100);

	return (
		<Window>
			<WindowTitle>
				<svg width='15' height='16' viewBox='0 0 15 16'>
					<path d='M4.500 1.500h6l2 2v8h-8z' fill='#e9f1fb' stroke='#5b7db5' />
					<path d='M1.500 4.500h5v9h-5z' fill='#dce8f7' stroke='#5b7db5' />
					<path d='M7 10l-4 5' stroke='#b4642b' strokeWidth='2' />
					<circle cx='9.500' cy='7.500' r='3.500' fill='#cfe6f5' stroke='#6a7f92' />
				</svg>
				<h2>Preview</h2>
				<WindowButtons>
					<IconButton aria-label='Minimize'><Glyph name='min' /></IconButton>
					<IconButton aria-label='Maximize'><Glyph name='max' /></IconButton>
					<IconButton aria-label='Close'><Glyph name='close' /></IconButton>
				</WindowButtons>
			</WindowTitle>
			<MenuBar>
				<Grip />
				<button>File</button>
				<button>View</button>
				<button>Background</button>
				<MenuCaret aria-label='More'><Caret /></MenuCaret>
			</MenuBar>
			<ToolBar>
				<Grip />
				<Tool name='thumbs' />
				<Tool name='find' />
				<Separator />
				<Tool name='options' />
				<Separator />
				<Tool name='open' />
				<Tool name='save' />
				<Separator />
				<Tool name='print' />
				<Tool name='quickPrint' />
				<Tool name='margins' />
				<Tool name='scale' drop={9} />
				<Separator />
				<Tool name='hand' />
				<Tool name='magnifier' />
				<Separator />
				<Tool name='zoomOut' />
				<ZoomSelect>
					<select
						aria-label='Zoom'
						value={zoom}
						onChange={(e) => setZoom(Number(e.target.value))}
					>
						<option value={50}>50%</option>
						<option value={100}>100%</option>
						<option value={150}>150%</option>
					</select>
					<Caret />
				</ZoomSelect>
				<Tool name='zoomIn' />
				<Separator />
				<Tool name='first' />
				<Tool name='prev' />
				<Tool name='next' />
				<Tool name='last' />
				<Separator />
				<Tool name='pages' drop={9} />
				<Tool name='fill' drop={9} />
				<Tool name='watermark' />
				<Separator />
				<Tool name='exportDoc' drop={17} />
				<Tool name='mail' drop={17} />
				<Separator />
				<Tool name='close' />
				<MoreTools aria-label='More tools'><Caret /></MoreTools>
			</ToolBar>
			<Viewer>
				<PageArea>
					<PageFrame>
						<Paper>
							<EdgeMargin />
							<TopMargin />
							<PaperBody>
								<ReportHead>
									<div>
										<h3>MEKONGSOFT</h3>
										<p>64 Nguyễn Đình Chiểu, Phường Đa Kao, Quận 1, HCM</p>
										<p>0901 000 508</p>
									</div>
									<div>
										<h3>TỔNG HỢP NỘI DUNG THU CHI</h3>
										<Period>Từ ngày 01/01/2024 đến ngày 27/01/2024</Period>
									</div>
								</ReportHead>
								<Report />
							</PaperBody>
						</Paper>
					</PageFrame>
				</PageArea>
				<VerticalScroll size='44%' />
			</Viewer>
			<BottomScroll>
				<ScrollButton aria-label='Scroll left'><Caret $dir='left' $color='#a3a3a3' /></ScrollButton>
				<ScrollButton aria-label='Scroll right'><Caret $dir='right' $color='#a3a3a3' /></ScrollButton>
			</BottomScroll>
			<PreviewStatus>
				<PageCount>Page 1 of 2</PageCount>
				<ZoomLabel htmlFor='zoom'>{zoom}%</ZoomLabel>
				<RoundButton aria-label='Zoom out'>
					<svg width='8' height='8'><path d='M0 3h8v2H0z' /></svg>
				</RoundButton>
				<ZoomSlider
					id='zoom'
					type='range'
					min='0'
					max='200'
					value={zoom}
					onChange={(e) => setZoom(Number(e.target.value))}
				/>
				<RoundButton aria-label='Zoom in'>
					<svg width='8' height='8'><path d='M0 3h8v2H0zM3 0h2v8H3z' /></svg>
				</RoundButton>
			</PreviewStatus>
		</Window>
	);
};

/* ---------- status bar ---------- */

const StatusBar = styled.footer`
	display: flex;
	align-items: center;
	flex: none;
	height: 27px;
	padding: 0 9px 0 8px;
	border-top: 1px dashed ${line};
	font-weight: 700;
	white-space: nowrap;
`;

const StatusItem = styled.span`
	padding-right: 14px;
	margin-right: 13px;
	line-height: 12px;
	border-right: 1px solid #b9b9c4;
`;

const Clock = styled.time`
	color: #ff0000;
`;

const Support = styled.span`
	margin-left: auto;
	padding-left: 9px;
	line-height: 26px;
	border-left: 1px dashed ${line};
`;

const App = () => {
	const [active, setActive] = useState(3);
	const [from, setFrom] = useState('01/01/2024');
	const [to, setTo] = useState('27/01/2024');

	return (
		<>
			<GlobalStyle />
			<Screen>
				<TitleBar>
					<QuickAccess>
						<svg width='16' height='16' viewBox='0 0 16 16'>
							<rect width='16' height='16' rx='4' fill='#ed1c24' />
							<path d='M2 3l3 2 3 6 2-4H8V5h5l-4 8H7z' fill='#fff' />
						</svg>
						<StyleButton aria-label='Style'><Ring /><Caret /></StyleButton>
						<IconButton aria-label='Customize' $width={55}>
							<Customize><Caret /></Customize>
						</IconButton>
					</QuickAccess>
					<AppTitle>Tổng hợp nội dung thu chi <span>- MekongSoft</span></AppTitle>
					<WindowButtons>
						<IconButton aria-label='Full screen'><Glyph name='full' /></IconButton>
						<IconButton aria-label='Minimize'><Glyph name='min' /></IconButton>
						<IconButton aria-label='Restore'><Glyph name='restore' /></IconButton>
						<IconButton aria-label='Close'><Glyph name='close' /></IconButton>
					</WindowButtons>
				</TitleBar>
				<TabStrip>
					<AppMenu aria-label='Application menu'>
						<svg width='16' height='13' viewBox='0 0 16 13'>
							<rect x='.5' y='.5' width='15' height='12' rx='1' fill='none' stroke='#777' />
							<path d='M5.500 0v13M8 3.500h5M8 5.500h5M8 7.500h5M8 9.500h5' stroke='#555' />
						</svg>
						<svg width='7' height='6' viewBox='0 0 7 6'>
							<path d='M.5 .5h6L3.500 5z' fill='none' stroke='#888' />
						</svg>
					</AppMenu>
					{tabs.map((tab, i) => (
						<Tab
							key={tab.name}
							$width={tab.width}
							$active={i === active}
							onClick={() => setActive(i)}
						>
							{tab.name}
						</Tab>
					))}
				</TabStrip>
				<Ribbon>
					{ribbon.map((item) => (
						<RibbonButton key={item.icon} $width={item.width}>
							<RibbonIcon name={item.icon} />
							<span>
								{item.lines[0]}
								<br />
								{item.lines[1]}
							</span>
						</RibbonButton>
					))}
					<RibbonEnd />
					<Collapse aria-label='Collapse ribbon'><Glyph name='up' /></Collapse>
				</Ribbon>
				<DocTabs>
					<ClosedTab aria-label='Close'><Glyph name='close' /></ClosedTab>
					<DocTab>
						Tổng hợp nội dung thu chi
						<IconButton aria-label='Close tab'><Glyph name='close' /></IconButton>
					</DocTab>
					<DocClose aria-label='Close all'><Glyph name='close' /></DocClose>
				</DocTabs>
				<DocPanel>
					<Filters>
						<FilterLabel htmlFor='from' $width={62}>Từ ngày</FilterLabel>
						<DateBox>
							<input id='from' value={from} onChange={(e) => setFrom(e.target.value)} />
							<IconButton type='button' aria-label='Pick date' $width={16}><Caret /></IconButton>
						</DateBox>
						<FilterLabel htmlFor='to' $width={71}>Đến ngày</FilterLabel>
						<DateBox>
							<input id='to' value={to} onChange={(e) => setTo(e.target.value)} />
							<IconButton type='button' aria-label='Pick date' $width={16}><Caret /></IconButton>
						</DateBox>
					</Filters>
					<GroupBox>
						<GroupTitle>TỔNG HỢP NỘI DUNG THU CHI</GroupTitle>
						<MainGrid />
					</GroupBox>
				</DocPanel>
				<StatusBar>
					<StatusItem>Chào mừng: Administrator đến với phần mềm MekongSoft</StatusItem>
					<StatusItem>Version: 4.5.0</StatusItem>
					<Clock>Ngày: 27/01/2024 9:34:51 SA</Clock>
					<Support>@2023 MEKONGSOFT. Thông tin hỗ trợ: 0901 000 508</Support>
				</StatusBar>
				<Preview />
			</Screen>
		</>
	);
};

export default App;
